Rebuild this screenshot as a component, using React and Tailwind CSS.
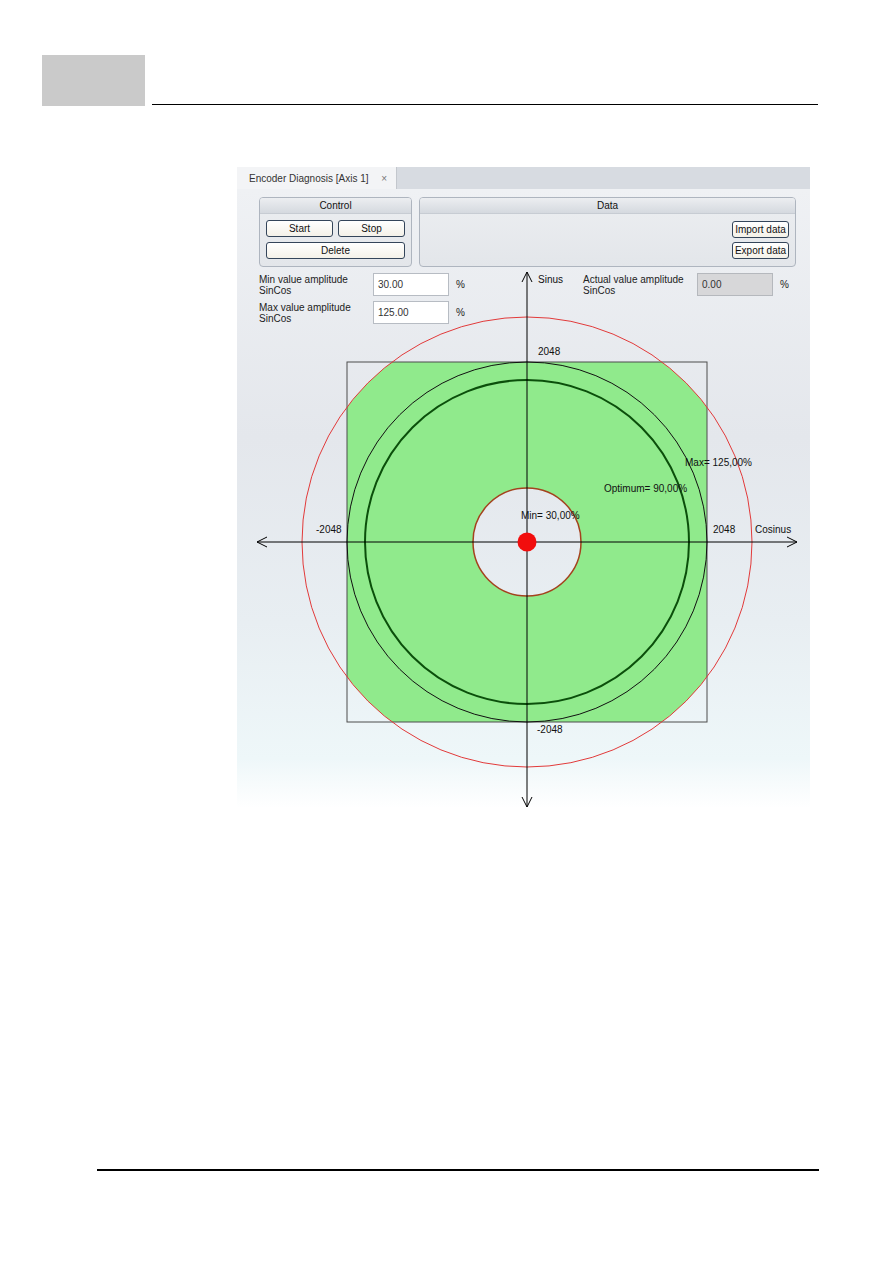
import React from 'react'

const font = { fontFamily: '"Liberation Sans", Arial, sans-serif' }

function Btn({ children, className = '' }) {
  return (
    <div className={`h-[17px] flex items-center justify-center rounded-[3px] border border-[#34455a] bg-gradient-to-b from-white to-[#f4f1e8] text-[10px] text-[#111] ${className}`}>
      {children}
    </div>
  )
}

function Group({ title, className = '', children }) {
  return (
    <div className={`flex flex-col rounded-[4px] border border-[#aeb5bf] bg-gradient-to-b from-[#eceef1] to-[#e3e6ea] overflow-hidden ${className}`}>
      <div className="h-[16px] flex items-center justify-center border-b border-[#c7ccd3] bg-gradient-to-b from-[#eceef1] to-[#d5d9df] text-[10px] text-[#111]">
        {title}
      </div>
      {children}
    </div>
  )
}

function Field({ label, value, gray }) {
  return (
    <div className="flex items-center">
      <div className="w-[114px] text-[10px] leading-[11px] text-[#222]">{label}<br />SinCos</div>
      <div className={`w-[76px] h-[23px] flex items-center pl-[4px] text-[10px] text-[#333] border ${gray ? 'bg-[#d7d7d9] border-[#b5b8bd]' : 'bg-white border-[#b7bcc3]'}`}>
        {value}
      </div>
      <span className="ml-[7px] text-[10px] text-[#222]">%</span>
    </div>
  )
}

// diagramm in page coords (viewBox offset = body origin)
function Chart() {
  const cx = 527
  const cy = 542
  return (
    <svg className="absolute inset-0" width="573" height="619" viewBox="237 189 573 619" style={font}>
      <defs>
        <clipPath id="sq">
          <rect x="347" y="362" width="360" height="360" />
        </clipPath>
      </defs>
      <g clipPath="url(#sq)">
        <path
          fillRule="evenodd"
          fill="#90ea8c"
          d={`M ${cx - 225} ${cy} a 225 225 0 1 0 450 0 a 225 225 0 1 0 -450 0 Z M ${cx - 54} ${cy} a 54 54 0 1 0 108 0 a 54 54 0 1 0 -108 0 Z`}
        />
      </g>
      <rect x="347" y="362" width="360" height="360" fill="none" stroke="#4d4d4d" strokeWidth="1" />
      <circle cx={cx} cy={cy} r="225" fill="none" stroke="#e23a3a" strokeWidth="1" />
      <circle cx={cx} cy={cy} r="180" fill="none" stroke="#111" strokeWidth="1" />
      <circle cx={cx} cy={cy} r="162" fill="none" stroke="#0b4f0b" strokeWidth="2" />
      <circle cx={cx} cy={cy} r="54" fill="none" stroke="#a4421e" strokeWidth="1.5" />

      <line x1="257" y1={cy} x2="797" y2={cy} stroke="#000" strokeWidth="1" />
      <line x1={cx} y1="272" x2={cx} y2="807" stroke="#000" strokeWidth="1" />
      <polyline points="267,537 257,542 267,547" fill="none" stroke="#000" />
      <polyline points="787,537 797,542 787,547" fill="none" stroke="#000" />
      <polyline points="522,282 527,272 532,282" fill="none" stroke="#000" />
      <polyline points="522,797 527,807 532,797" fill="none" stroke="#000" />

      <circle cx={cx} cy={cy} r="9.5" fill="#f20d0d" />

      <g fontSize="10" fill="#111">
        <text x="538" y="283">Sinus</text>
        <text x="538" y="355">2048</text>
        <text x="316" y="533">-2048</text>
        <text x="713" y="533">2048</text>
        <text x="755" y="533">Cosinus</text>
        <text x="537" y="733">-2048</text>
        <text x="685" y="466">Max= 125,00%</text>
        <text x="604" y="492">Optimum= 90,00%</text>
        <text x="521" y="519">Min= 30,00%</text>
      </g>
    </svg>
  )
}

export default function App() {
  return (
    <div className="w-[893px] h-[1263px] bg-white flex flex-col" style={font}>
      {/* kopfzeile */}
      <div className="flex items-end pt-[55px] pl-[42px]">
        <div className="w-[103px] h-[51px] bg-[#cacaca]" />
        <div className="ml-[7px] mb-[1px] w-[666px] h-[1.5px] bg-black" />
      </div>

      {/* screenshot */}
      <div className="mt-[61px] ml-[237px] w-[573px] h-[641px] flex flex-col">
        <div className="h-[22px] flex bg-[#d7dbe1]">
          <div className="w-[160px] flex items-center justify-between pl-[12px] pr-[9px] bg-[#f3f4f6] border-r border-[#c3c7cd] text-[10px] text-[#333]">
            <span>Encoder Diagnosis [Axis 1]</span>
            <span className="text-[#777] text-[10px]">×</span>
          </div>
        </div>

        <div className="relative flex-1 bg-[linear-gradient(180deg,#eff1f4_0%,#e4e7ec_40%,#e8eef2_70%,#eef7f9_92%,#ffffff_100%)]">
          <Chart />
          <div className="relative pt-[8px] pl-[22px]">
            <div className="flex gap-[7px] h-[70px]">
              <Group title="Control" className="w-[153px]">
                <div className="flex flex-col gap-[5px] pt-[6px] pl-[6px]">
                  <div className="flex gap-[5px]">
                    <Btn className="w-[67px]">Start</Btn>
                    <Btn className="w-[67px]">Stop</Btn>
                  </div>
                  <Btn className="w-[139px]">Delete</Btn>
                </div>
              </Group>
              <Group title="Data" className="w-[377px]">
                <div className="flex flex-col items-end gap-[4px] pt-[7px] pr-[6px]">
                  <Btn className="w-[57px]">Import data</Btn>
                  <Btn className="w-[57px]">Export data</Btn>
                </div>
              </Group>
            </div>

            <div className="flex items-start mt-[6px]">
              <div className="w-[324px] flex flex-col gap-[5px]">
                <Field label="Min value amplitude" value="30.00" />
                <Field label="Max value amplitude" value="125.00" />
              </div>
              <Field label="Actual value amplitude" value="0.00" gray />
            </div>
          </div>
        </div>
      </div>

      {/* fusszeile */}
      <div className="mt-[361px] ml-[97px] w-[722px] h-[1.5px] bg-black" />
    </div>
  )
}
